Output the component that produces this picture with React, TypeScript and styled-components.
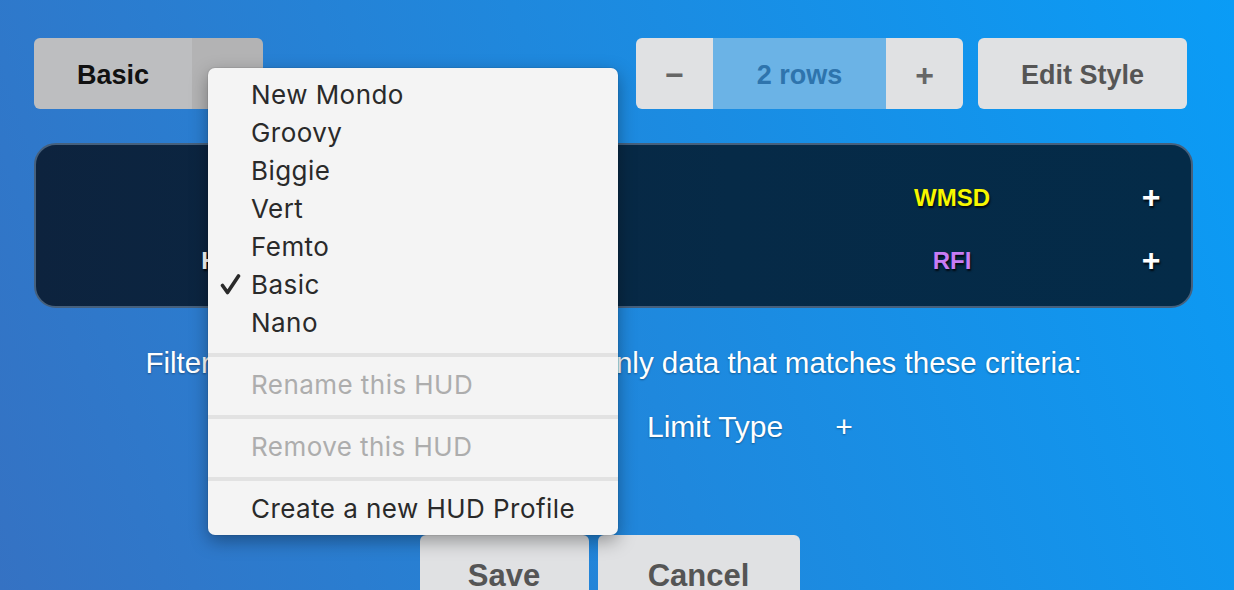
import React from "react";
import styled, { createGlobalStyle } from "styled-components";

const GlobalStyle = createGlobalStyle`
	html, body {
		margin: 0;
		padding: 0;
	}
	body {
		font-family: "Liberation Sans", Arial, sans-serif;
	}
`;

type HudItem = { label: string; color: string };

const hudRows: HudItem[][] = [
	[
		{ label: "SOG", color: "#ffffff" },
		{ label: "Alt", color: "#c77cf5" },
		{ label: "WMSD", color: "#f7f700" },
	],
	[
		{ label: "HDOP", color: "#ffffff" },
		{ label: "kHz", color: "#3ccf8e" },
		{ label: "RFI", color: "#c77cf5" },
	],
];

type MenuEntry =
	| { kind: "item"; label: string; checked?: boolean; disabled?: boolean }
	| { kind: "separator" };

const menuEntries: MenuEntry[] = [
	{ kind: "item", label: "New Mondo" },
	{ kind: "item", label: "Groovy" },
	{ kind: "item", label: "Biggie" },
	{ kind: "item", label: "Vert" },
	{ kind: "item", label: "Femto" },
	{ kind: "item", label: "Basic", checked: true },
	{ kind: "item", label: "Nano" },
	{ kind: "separator" },
	{ kind: "item", label: "Rename this HUD", disabled: true },
	{ kind: "separator" },
	{ kind: "item", label: "Remove this HUD", disabled: true },
	{ kind: "separator" },
	{ kind: "item", label: "Create a new HUD Profile" },
];

const CheckIcon = () => (
	<CheckSvg viewBox="0 0 21 21" width="21" height="21">
		<path
			d="M2.5 11.5 L7.5 18.5 L18.5 2"
			fill="none"
			stroke="#2a2a2a"
			strokeWidth="3.6"
			strokeLinecap="round"
			strokeLinejoin="round"
		/>
	</CheckSvg>
);

export default function App() {
	return (
		<>
			<GlobalStyle />
			<Page>
				<TopRow>
					<SplitWrap>
						<SplitMain>Basic</SplitMain>
						<SplitToggle>
							<Caret />
						</SplitToggle>
						<Menu>
							{menuEntries.map((entry, i) =>
								entry.kind === "separator" ? (
									<MenuSeparator key={i} />
								) : (
									<MenuItem key={i} $disabled={entry.disabled}>
										{entry.checked && <CheckIcon />}
										{entry.label}
									</MenuItem>
								)
							)}
						</Menu>
					</SplitWrap>
					<RightGroup>
						<Stepper>
							<StepButton>−</StepButton>
							<StepValue>2 rows</StepValue>
							<StepButton>+</StepButton>
						</Stepper>
						<GrayButton $width={209}>Edit Style</GrayButton>
					</RightGroup>
				</TopRow>

				<HudPanel>
					{hudRows.map((row, r) => (
						<React.Fragment key={r}>
							{row.map((item) => (
								<HudCell key={item.label} $color={item.color}>
									{item.label}
								</HudCell>
							))}
							<HudAdd>+</HudAdd>
						</React.Fragment>
					))}
				</HudPanel>

				<FilterText>
					Filter this HUD profile to show you only data that matches these
					criteria:
				</FilterText>

				<LimitRow>
					<LimitLabel>Data Field</LimitLabel>
					<LimitLabel>Limit Type</LimitLabel>
					<LimitAdd>+</LimitAdd>
				</LimitRow>

				<BottomRow>
					<GrayButton $width={169} $big>
						Save
					</GrayButton>
					<GrayButton $width={202} $big>
						Cancel
					</GrayButton>
				</BottomRow>
			</Page>
		</>
	);
}

const Page = styled.div`
	width: 1234px;
	height: 590px;
	overflow: hidden;
	box-sizing: border-box;
	padding: 38px 41px 0 34px;
	background: linear-gradient(70deg, #3572c3 0%, #1f88dd 50%, #0a9cf6 100%);
`;

const TopRow = styled.div`
	display: flex;
	justify-content: space-between;
	align-items: flex-start;
	margin-right: 6px;
	height: 71px;
`;

const SplitWrap = styled.div`
	position: relative;
	display: flex;
	width: 229px;
	height: 71px;
	border-radius: 6px;
`;

const SplitMain = styled.div`
	width: 158px;
	display: flex;
	align-items: center;
	justify-content: center;
	padding-top: 3px;
	box-sizing: border-box;
	background: #bdbec0;
	border-radius: 6px 0 0 6px;
	color: #111;
	font-size: 27px;
	font-weight: bold;
`;

const SplitToggle = styled.div`
	flex: 1;
	display: flex;
	align-items: center;
	justify-content: center;
	background: #b3b3b4;
	border-radius: 0 6px 6px 0;
`;

const Caret = styled.span`
	width: 0;
	height: 0;
	border-left: 7px solid transparent;
	border-right: 7px solid transparent;
	border-top: 8px solid #555;
`;

const Menu = styled.div`
	position: absolute;
	left: 174px;
	top: 30px;
	width: 410px;
	box-sizing: border-box;
	padding: 7px 0 8px;
	background: #f4f4f4;
	border-radius: 7px;
	box-shadow: 0 6px 18px rgba(0, 0, 0, 0.35), 0 0 0 1px rgba(0, 0, 0, 0.06);
	z-index: 10;
`;

const MenuItem = styled.div<{ $disabled?: boolean }>`
	position: relative;
	height: 38px;
	display: flex;
	align-items: center;
	padding-left: 43px;
	font-family: Inter, "Liberation Sans", sans-serif;
	font-size: 26px;
	letter-spacing: 0.45px;
	color: ${({ $disabled }) => ($disabled ? "#adadad" : "#2a2a2a")};
`;

const CheckSvg = styled.svg`
	position: absolute;
	left: 12px;
	top: 9px;
`;

const MenuSeparator = styled.div`
	height: 4px;
	margin: 12px 0 8px;
	background: #e2e2e2;
`;

const RightGroup = styled.div`
	display: flex;
	gap: 15px;
`;

const Stepper = styled.div`
	display: flex;
	height: 71px;
	border-radius: 6px;
	overflow: hidden;
`;

const StepButton = styled.div`
	width: 77px;
	display: flex;
	align-items: center;
	justify-content: center;
	padding-top: 3px;
	box-sizing: border-box;
	background: #e0e1e3;
	color: #666;
	font-size: 32px;
	font-weight: bold;
`;

const StepValue = styled.div`
	width: 173px;
	display: flex;
	align-items: center;
	justify-content: center;
	padding-top: 3px;
	box-sizing: border-box;
	background: #6bb3e6;
	color: #2e74ad;
	font-size: 27px;
	font-weight: bold;
`;

const GrayButton = styled.div<{ $width: number; $big?: boolean }>`
	width: ${({ $width }) => $width}px;
	height: ${({ $big }) => ($big ? 80 : 71)}px;
	display: flex;
	align-items: center;
	justify-content: center;
	padding-top: ${({ $big }) => ($big ? 2 : 3)}px;
	box-sizing: border-box;
	background: #e0e1e3;
	border-radius: 6px;
	color: #555;
	font-size: ${({ $big }) => ($big ? 31 : 27)}px;
	font-weight: bold;
`;

const HudPanel = styled.div`
	margin-top: 34px;
	height: 165px;
	box-sizing: border-box;
	border: 2px solid #46607c;
	border-radius: 22px;
	background: linear-gradient(90deg, #0d233e 0%, #062a47 60%, #042b48 100%);
	padding: 21px 19px 14px 21px;
	display: grid;
	grid-template-columns: repeat(3, 358px) 40px;
	grid-auto-rows: 63px;
	align-items: center;
`;

const HudCell = styled.div<{ $color: string }>`
	text-align: center;
	color: ${({ $color }) => $color};
	font-size: 24px;
	font-weight: bold;
	text-shadow: 1px 2px 2px rgba(0, 0, 0, 0.8);
`;

const HudAdd = styled.div`
	text-align: center;
	color: #fff;
	font-size: 32px;
	font-weight: bold;
	text-shadow: 1px 2px 2px rgba(0, 0, 0, 0.8);
`;

const FilterText = styled.div`
	margin-top: 38px;
	text-align: center;
	color: #fff;
	font-size: 29.5px;
	line-height: 34px;
	text-shadow: 0 1px 2px rgba(0, 0, 0, 0.35);
	white-space: nowrap;
`;

const LimitRow = styled.div`
	margin-top: 30px;
	height: 34px;
	display: flex;
	justify-content: center;
	align-items: center;
	gap: 52px;
	padding-left: 84px;
	color: #fff;
	text-shadow: 0 1px 2px rgba(0, 0, 0, 0.35);
`;

const LimitLabel = styled.div`
	font-size: 30px;
`;

const LimitAdd = styled.div`
	font-size: 30px;
`;

const BottomRow = styled.div`
	margin-top: 91px;
	display: flex;
	justify-content: center;
	gap: 9px;
	padding-right: 8px;
`;
